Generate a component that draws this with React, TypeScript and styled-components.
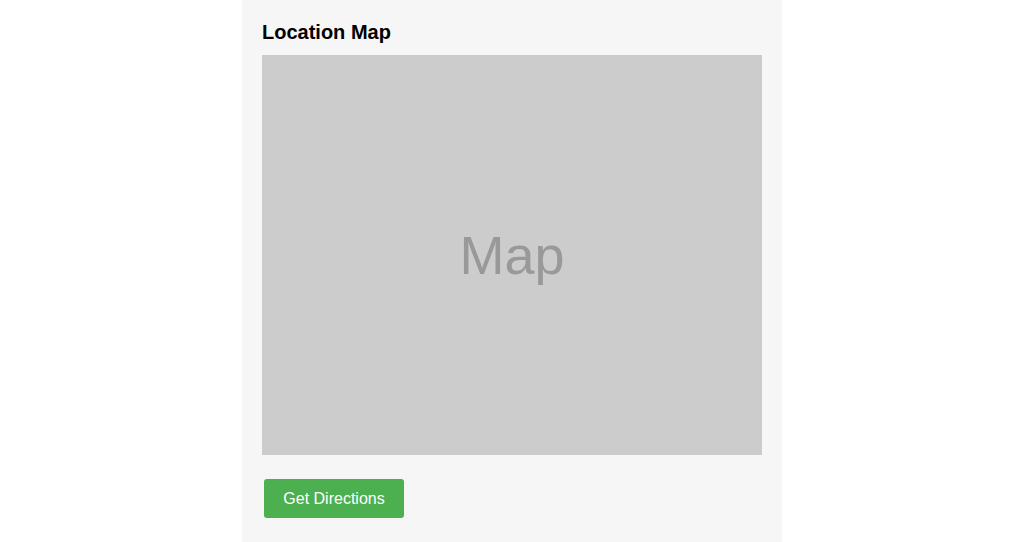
import React from "react";
import styled, { createGlobalStyle } from "styled-components";

const GlobalStyle = createGlobalStyle`
  html, body { margin: 0; padding: 0; background: #ffffff; }
  body { font-family: "Liberation Sans", Arial, sans-serif; }
`;

const Page = styled.div`
  display: flex;
  justify-content: center;
  min-height: 542px;
`;

const Panel = styled.section`
  width: 540px;
  box-sizing: border-box;
  padding: 20px;
  background: #f6f6f6;
  display: flex;
  flex-direction: column;
  align-items: flex-start;
`;

const Title = styled.h2`
  margin: 0 0 11px;
  font-size: 20px;
  font-weight: bold;
  line-height: 24px;
  color: #000;
`;

const MapBox = styled.div`
  width: 500px;
  height: 400px;
  background: #cccccc;
  display: flex;
  align-items: center;
  justify-content: center;
  font-size: 54px;
  color: #999999;
`;

const Button = styled.button`
  margin: 24px 0 0 2px;
  width: 140px;
  height: 39px;
  padding: 0;
  border: none;
  border-radius: 3px;
  background: #4caf50;
  color: #ffffff;
  font-family: "Liberation Sans", Arial, sans-serif;
  font-size: 16px;
  cursor: pointer;
`;

export default function App() {
  return (
    <>
      <GlobalStyle />
      <Page>
        <Panel>
          <Title>Location Map</Title>
          <MapBox>Map</MapBox>
          <Button>Get Directions</Button>
        </Panel>
      </Page>
    </>
  );
}
